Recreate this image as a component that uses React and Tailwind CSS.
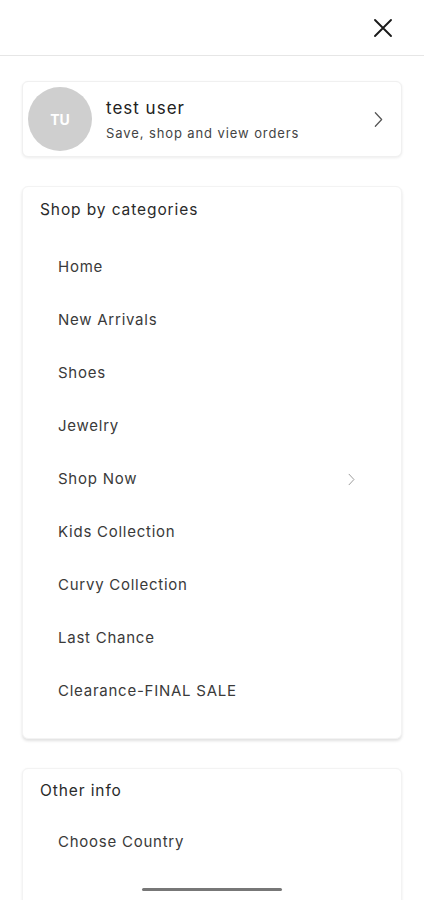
import React from 'react';

const categories = [
    'Home',
    'New Arrivals',
    'Shoes',
    'Jewelry',
    'Shop Now',
    'Kids Collection',
    'Curvy Collection',
    'Last Chance',
    'Clearance-FINAL SALE',
];

function Chevron({ className }) {
    return (
        <svg viewBox="0 0 10 18" fill="none" stroke="currentColor" strokeWidth="1.4" strokeLinecap="round" strokeLinejoin="round" className={className}>
            <path d="M1.5 1.5L8.5 9L1.5 16.5" />
        </svg>
    );
}

function MenuItem({ label, hasChildren }) {
    return (
        <div className="h-[53px] flex items-center justify-between pl-[35px] pr-[46px] text-[15px] tracking-[0.75px] text-[#3a3a3a]">
            <span>{label}</span>
            {hasChildren && <Chevron className="w-[7px] h-[13px] text-[#9a9a9a]" />}
        </div>
    );
}

export default function App() {
    return (
        <div className="w-[424px] h-[900px] bg-white overflow-hidden relative" style={{ fontFamily: 'Inter, "Noto Sans", sans-serif' }}>
            <div className="h-[56px] border-b border-[#e6e6e6] flex items-center justify-end pr-[31px]">
                <svg viewBox="0 0 20 20" className="w-[20px] h-[20px] text-[#1a1a1a]" fill="none" stroke="currentColor" strokeWidth="1.9" strokeLinecap="round">
                    <path d="M2 2L18 18M18 2L2 18" />
                </svg>
            </div>

            <div className="mx-[22px] mt-[25px] h-[76px] rounded-md bg-white border border-[#f0f0f0] shadow-[0_1px_3px_rgba(0,0,0,0.08)] flex items-center pl-[5px] pr-[18px]">
                <div className="w-[64px] h-[64px] rounded-full bg-[#cfcfcf] flex items-center justify-center text-white font-bold text-[14px]">
                    TU
                </div>
                <div className="ml-[14px] flex-1">
                    <div className="text-[17px] tracking-[1px] text-[#222] leading-[22px]">test user</div>
                    <div className="text-[13px] tracking-[0.9px] text-[#444] leading-[18px] mt-[5px]">Save, shop and view orders</div>
                </div>
                <Chevron className="w-[9px] h-[17px] text-[#555]" />
            </div>

            <div className="mx-[22px] mt-[29px] rounded-md bg-white border border-[#f3f3f3] shadow-[0_2px_3px_rgba(0,0,0,0.12)] pt-[12px] pb-[20px]">
                <div className="pl-[17px] text-[15.5px] tracking-[0.9px] leading-[22px] text-[#2a2a2a] mb-[20px]">Shop by categories</div>
                {categories.map((c) => (
                    <MenuItem key={c} label={c} hasChildren={c === 'Shop Now'} />
                ))}
            </div>

            <div className="mx-[22px] mt-[29px] rounded-md bg-white border border-[#f3f3f3] shadow-[0_1px_3px_rgba(0,0,0,0.08)] pt-[11px] pb-[40px]">
                <div className="pl-[17px] text-[15.5px] tracking-[0.9px] leading-[22px] text-[#2a2a2a] mb-[14px]">Other info</div>
                <MenuItem label="Choose Country" />
            </div>

            <div className="absolute left-[142px] bottom-[9px] w-[140px] h-[3px] rounded-full bg-[#777]" />
        </div>
    );
}
